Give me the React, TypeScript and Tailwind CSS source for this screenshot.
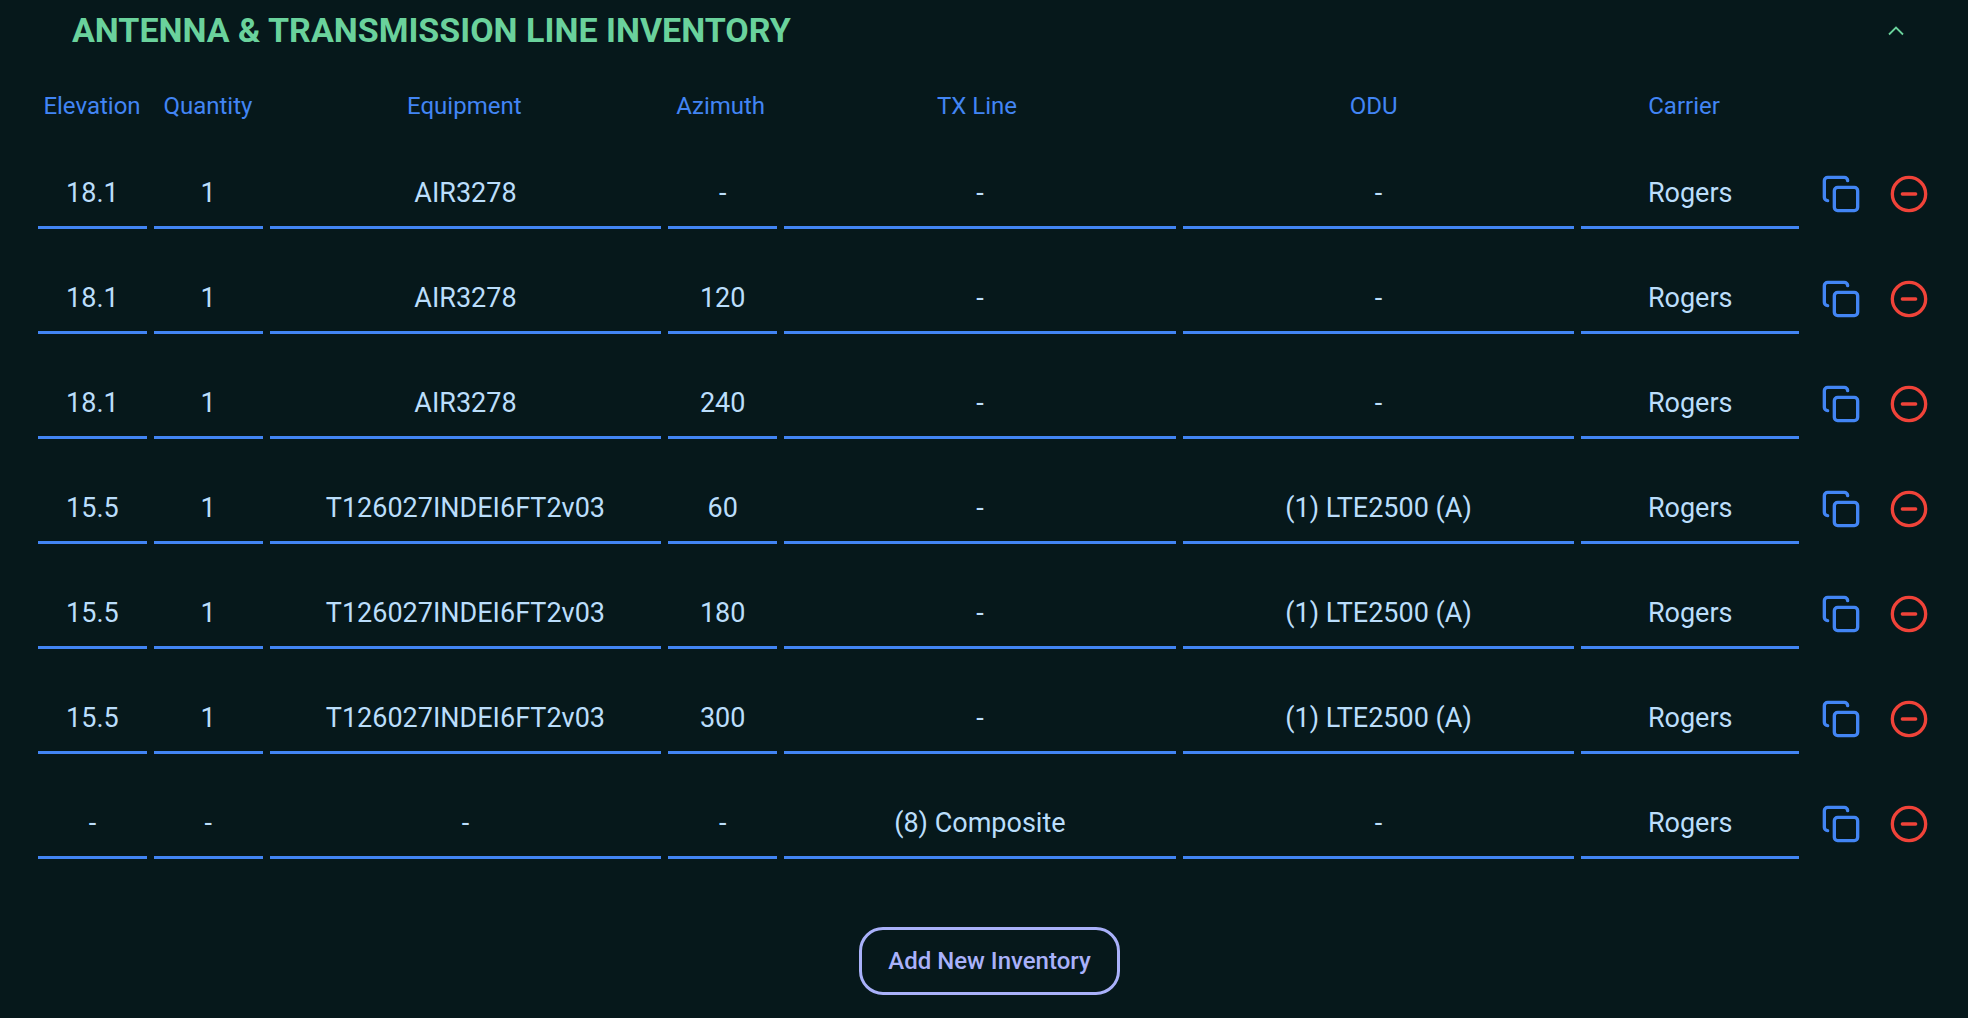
import { useState } from "react";
import { CircleMinus, Copy } from "lucide-react";

const columns = ["Elevation", "Quantity", "Equipment", "Azimuth", "TX Line", "ODU", "Carrier"];

const initialRows = [
  ["18.1", "1", "AIR3278", "-", "-", "-", "Rogers"],
  ["18.1", "1", "AIR3278", "120", "-", "-", "Rogers"],
  ["18.1", "1", "AIR3278", "240", "-", "-", "Rogers"],
  ["15.5", "1", "T126027INDEI6FT2v03", "60", "-", "(1) LTE2500 (A)", "Rogers"],
  ["15.5", "1", "T126027INDEI6FT2v03", "180", "-", "(1) LTE2500 (A)", "Rogers"],
  ["15.5", "1", "T126027INDEI6FT2v03", "300", "-", "(1) LTE2500 (A)", "Rogers"],
  ["-", "-", "-", "-", "(8) Composite", "-", "Rogers"],
];

export default function App() {
  const [rows, setRows] = useState(initialRows);
  const [open, setOpen] = useState(true);

  const edit = (r: number, c: number, value: string) =>
    setRows(rows.map((row, i) => (i === r ? row.map((v, j) => (j === c ? value : v)) : row)));
  const duplicate = (r: number) =>
    setRows([...rows.slice(0, r + 1), [...rows[r]], ...rows.slice(r + 1)]);
  const remove = (r: number) => setRows(rows.filter((_, i) => i !== r));

  return (
    <main className="min-h-screen bg-[#06181b] pb-5 font-['Roboto',sans-serif]">
      <header className="flex items-center justify-between pt-2 pr-16 pl-18">
        <h1 className="text-[34px] leading-11 font-bold text-[#6ad29c]">
          ANTENNA &amp; TRANSMISSION LINE INVENTORY
        </h1>
        <button
          type="button"
          aria-label="Toggle section"
          aria-expanded={open}
          onClick={() => setOpen(!open)}
          className="pt-0.5 text-[#6ad29c]"
        >
          <svg width="16" height="10" viewBox="0 0 16 10" fill="none" stroke="currentColor" strokeWidth="1.8">
            <path d={open ? "M1 8.5 8 1.5l7 7" : "M1 1.5l7 7 7-7"} />
          </svg>
        </button>
      </header>

      {open && (
        <section className="pr-[39px] pl-[38px]">
          <table className="mt-[38px] block">
            <thead className="block">
              <tr className="grid grid-cols-[5fr_5fr_18fr_5fr_18fr_18fr_10fr_129px] gap-x-2">
                {columns.map((name) => (
                  <th
                    key={name}
                    scope="col"
                    className="min-w-0 text-center text-2xl font-normal whitespace-nowrap text-[#4285f4]"
                  >
                    {name}
                  </th>
                ))}
              </tr>
            </thead>
            <tbody className="mt-[35px] flex flex-col gap-[33px]">
              {rows.map((row, r) => (
                <tr
                  key={r}
                  className="grid grid-cols-[5fr_5fr_18fr_5fr_18fr_18fr_10fr_123px] items-center gap-x-[7px]"
                >
                  {row.map((value, c) => (
                    <td key={c} className="min-w-0">
                      <input
                        aria-label={columns[c]}
                        value={value}
                        onChange={(e) => edit(r, c, e.target.value)}
                        className="block h-[72px] w-full border-b-3 border-[#4285f4] bg-transparent pt-0.5 text-center text-[27px] text-[#bbdefb] outline-none"
                      />
                    </td>
                  ))}
                  <td className="flex justify-between pt-0.5 pl-[15px]">
                    <button
                      type="button"
                      aria-label="Duplicate row"
                      onClick={() => duplicate(r)}
                      className="text-[#4285f4]"
                    >
                      <Copy size={40} />
                    </button>
                    <button
                      type="button"
                      aria-label="Remove row"
                      onClick={() => remove(r)}
                      className="text-[#f04339]"
                    >
                      <CircleMinus size={40} />
                    </button>
                  </td>
                </tr>
              ))}
            </tbody>
          </table>

          <div className="mt-[68px] flex justify-center pl-3">
            <button
              type="button"
              onClick={() => setRows([...rows, columns.map(() => "-")])}
              className="h-[68px] rounded-3xl border-3 border-[#a9b1fa] px-[26px] text-2xl font-medium text-[#a9b1fa]"
            >
              Add New Inventory
            </button>
          </div>
        </section>
      )}
    </main>
  );
}
